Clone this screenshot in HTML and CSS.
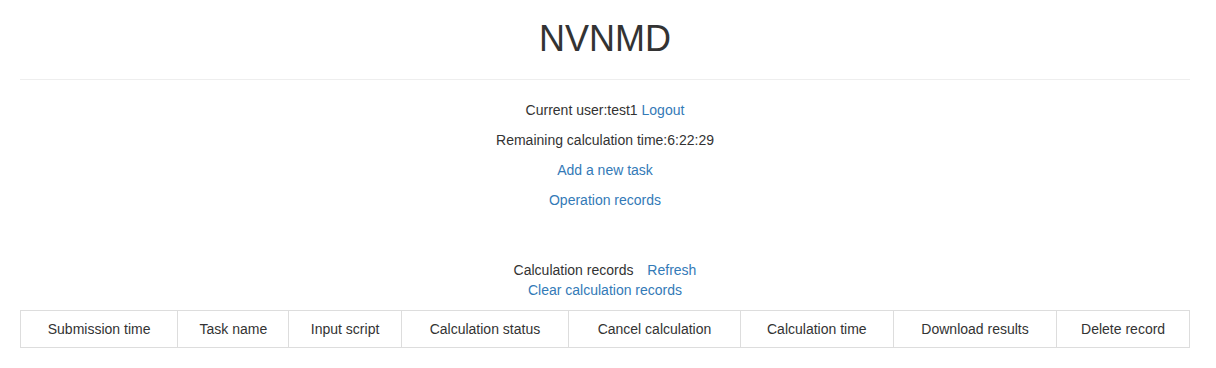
FILE: index.html
```html
<!DOCTYPE html>
<html lang="en">

<head>
    <meta charset="UTF-8">
    <title>NVNMD</title>
    <link rel="stylesheet" href="styles.css">
</head>

<body>
    <div class="container">
        <h1>NVNMD</h1>
        <hr>

        <div class="info">
            <p>Current user:test1 <a href="#">Logout</a></p>
            <p>Remaining calculation time:6:22:29</p>
            <p><a href="#">Add a new task</a></p>
            <p><a href="#">Operation records</a></p>
        </div>

        <div class="records">
            <div>Calculation records <a href="#" class="refresh">Refresh</a></div>
            <div><a href="#">Clear calculation records</a></div>
        </div>

        <table class="table">
            <thead>
                <tr>
                    <th>Submission time</th>
                    <th>Task name</th>
                    <th>Input script</th>
                    <th>Calculation status</th>
                    <th>Cancel calculation</th>
                    <th>Calculation time</th>
                    <th>Download results</th>
                    <th>Delete record</th>
                </tr>
            </thead>
            <tbody id="record-table">
            </tbody>
        </table>
    </div>
</body>

</html>
```

FILE: styles.css
```css
body {
    margin: 0;
    font-family: "Liberation Sans", Arial, sans-serif;
    font-size: 14px;
    line-height: 20px;
    color: #333;
    background: #fff;
}

a {
    color: #337ab7;
    text-decoration: none;
}

.container {
    width: 1170px;
    padding: 0 20px;
}

h1 {
    margin: 19px 0 10px;
    font-size: 36px;
    font-weight: 500;
    line-height: 1.1;
    text-align: center;
}

hr {
    margin: 20px 0;
    border: 0;
    border-top: 1px solid #eee;
}

.info {
    text-align: center;
}

.info p {
    margin: 0 0 10px;
}

.records {
    margin-top: 50px;
    text-align: center;
}

.records .refresh {
    margin-left: 10px;
}

.table {
    width: 100%;
    margin-top: 10px;
    border-collapse: collapse;
}

.table th {
    padding: 8px;
    border: 1px solid #ddd;
    font-weight: normal;
    text-align: center;
}
```
